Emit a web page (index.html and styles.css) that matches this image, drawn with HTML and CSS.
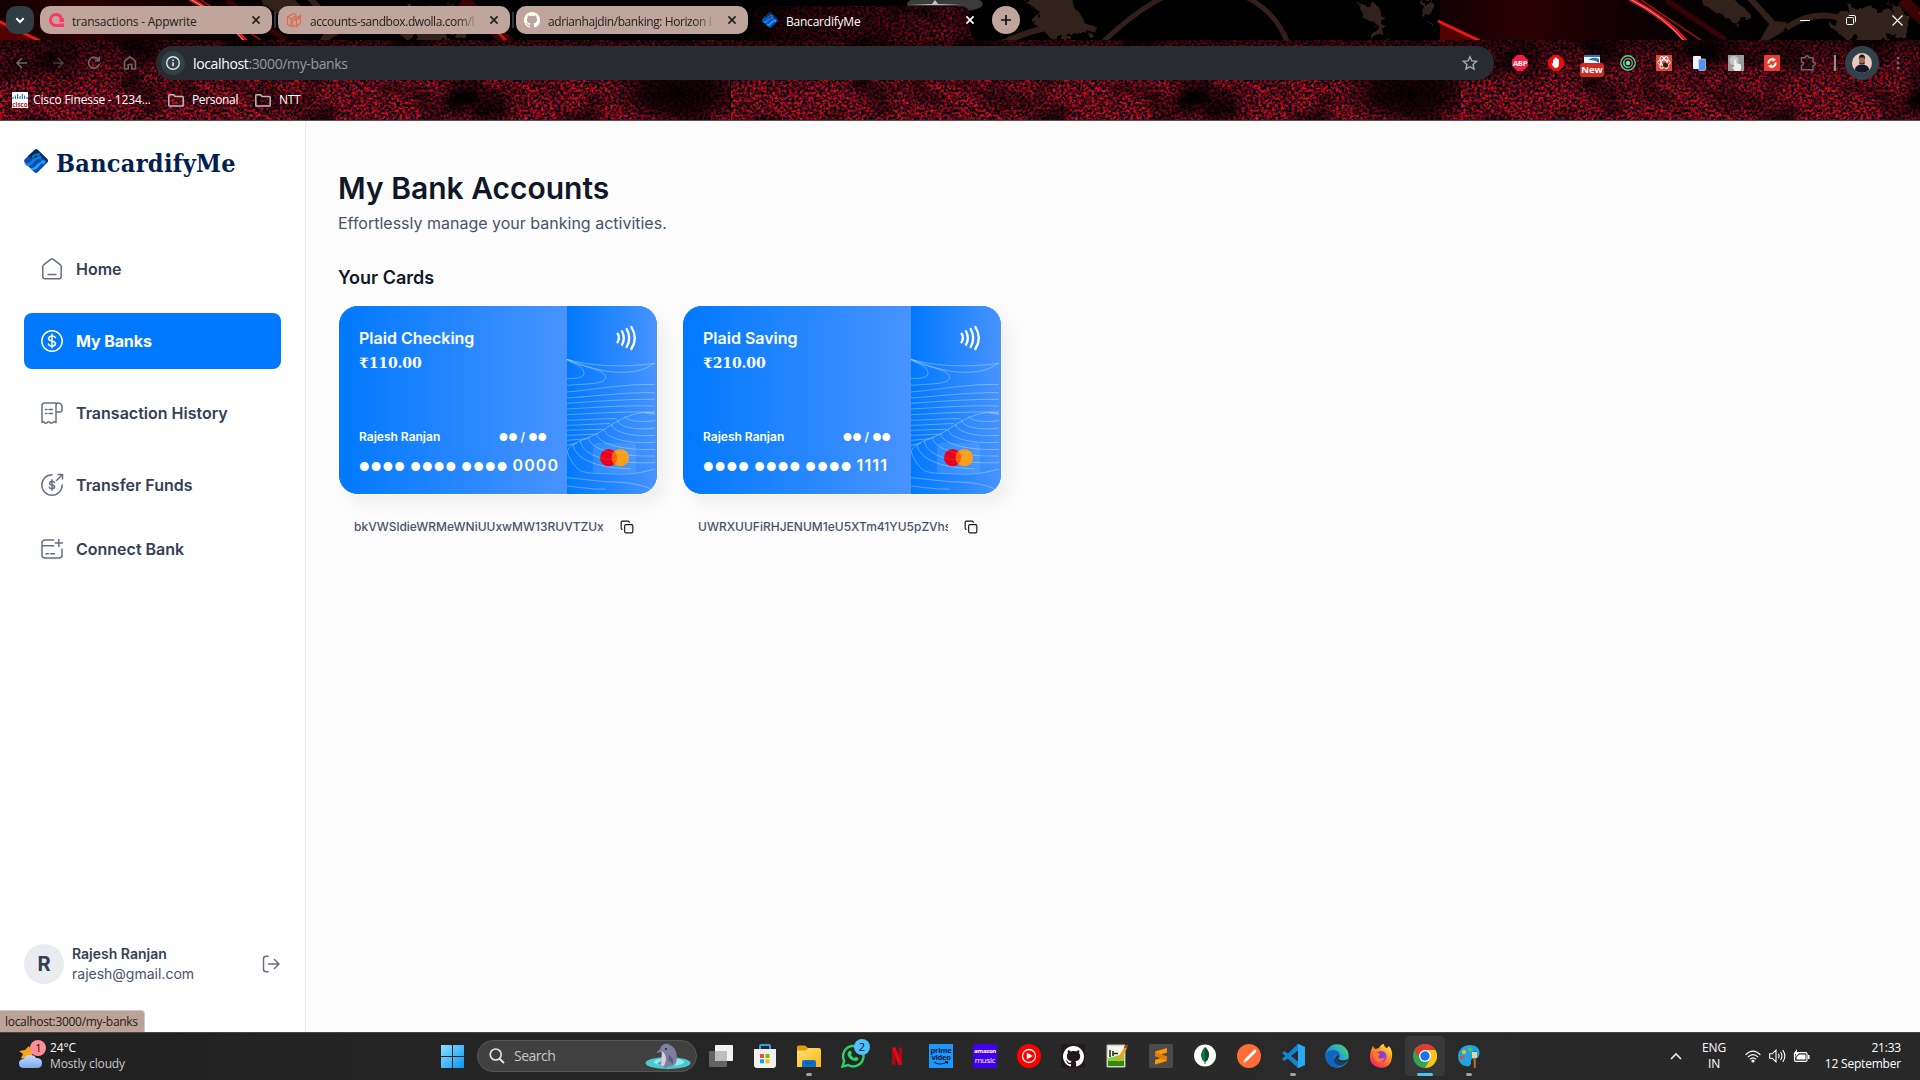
FILE: index.html
```html
<!DOCTYPE html>
<html lang="en">
<head>
<meta charset="utf-8">
<title>BancardifyMe</title>
<link rel="stylesheet" href="styles.css">
</head>
<body>
<svg width="0" height="0" class="defs">
  <defs>
    <linearGradient id="cardBlue" x1="0" x2="1" y1="0" y2="0"><stop offset="0" stop-color="#0179fe"/><stop offset="1" stop-color="#4893ff"/></linearGradient>
    <linearGradient id="win" x1="0" y1="0" x2="1" y2="1"><stop offset="0" stop-color="#8be0ff"/><stop offset="1" stop-color="#0a96f5"/></linearGradient>
    <linearGradient id="fold" x1="0" y1="0" x2="1" y2="1"><stop offset="0" stop-color="#ffe07a"/><stop offset="1" stop-color="#f8b80f"/></linearGradient>
    <linearGradient id="edgeG" x1="0" y1="1" x2="1" y2="0"><stop offset="0" stop-color="#0b5fb8"/><stop offset=".5" stop-color="#1d9be0"/><stop offset="1" stop-color="#5be05a"/></linearGradient>
    <linearGradient id="fireG" x1=".9" y1="0" x2=".2" y2="1"><stop offset="0" stop-color="#fff14a"/><stop offset=".45" stop-color="#ff8a1e"/><stop offset="1" stop-color="#f5156c"/></linearGradient>
    <linearGradient id="cloud" x1="0" y1="0" x2="0" y2="1"><stop offset="0" stop-color="#c4dcff"/><stop offset="1" stop-color="#7fa9ee"/></linearGradient>
    <symbol id="x" viewBox="0 0 10 10"><path d="M1.400 1.400l7.200 7.200M8.600 1.400l-7.200 7.200" stroke="currentColor" stroke-width="1.700" fill="none"/></symbol>
    <symbol id="octo" viewBox="0 0 16 16"><path fill="currentColor" d="M8 0C3.58 0 0 3.58 0 8c0 3.54 2.29 6.53 5.47 7.59.4.07.55-.17.55-.38 0-.19-.01-.82-.01-1.49-2.01.37-2.53-.49-2.69-.94-.09-.23-.48-.94-.82-1.13-.28-.15-.68-.52-.01-.53.63-.01 1.08.58 1.23.82.72 1.21 1.87.87 2.33.66.07-.52.28-.87.51-1.07-1.78-.2-3.64-.89-3.64-3.95 0-.87.31-1.59.82-2.15-.08-.2-.36-1.02.08-2.12 0 0 .67-.21 2.2.82.64-.18 1.32-.27 2-.27s1.36.09 2 .27c1.53-1.04 2.2-.82 2.2-.82.44 1.1.16 1.92.08 2.12.51.56.82 1.27.82 2.15 0 3.07-1.87 3.75-3.65 3.95.29.25.54.73.54 1.48 0 1.07-.01 1.93-.01 2.2 0 .21.15.46.55.38A8.01 8.01 0 0 0 16 8c0-4.42-3.58-8-8-8z"/></symbol>
    <symbol id="folder" viewBox="0 0 16 13"><path d="M.8 11.200V1.600q0-.8.8-.8h4l1.600 1.700h7.200q.8 0 .8.8v7.900q0 .9-.8.9H1.600q-.8 0-.8-.9z" fill="none" stroke="#bfb9b7" stroke-width="1.500"/></symbol>
    <symbol id="logo" viewBox="0 0 24 24"><path d="M10.300 1q1.700-1.400 3.400 0l9.500 9.300q1.400 1.700 0 3.400l-9.500 9.500q-1.700 1.400-3.400 0L.8 13.700q-1.400-1.700 0-3.400z" fill="#0a4fb0"/><path d="M12 0q1 0 1.700.7l9.800 9.600q.8.800.5 3L16 7 7 9 4 7z" fill="#052b6b"/><path d="M0 14q5 1 8-3 2-2.500 5.500-2.400V6l4 1.200-.8 4.100-1.500-1.500q-3 .2-5 3.200-3 4.500-7 4z" fill="#1479e6"/><path d="M6 19q4 .5 6.600-3.300 2-2.700 5-3l.1-1.900 3.600 1.300-1.200 3.500-1.300-1.300q-2 .3-3.600 2.600-2.600 4-6.500 4z" fill="#2aa0ff"/><path d="M8 8.500q3-3.500 8-3.500" stroke="#178f9c" stroke-width="1.600" fill="none"/></symbol>
    <symbol id="copy" viewBox="0 0 24 24"><rect x="8" y="8" width="14" height="14" rx="2" fill="none" stroke="currentColor" stroke-width="2"/><path d="M4 16c-1.100 0-2-.9-2-2V4c0-1.100.9-2 2-2h10c1.100 0 2 .9 2 2" fill="none" stroke="currentColor" stroke-width="2" stroke-linecap="round"/></symbol>
    <symbol id="panel" viewBox="0 0 270 564">
      <rect width="270" height="564" fill="url(#cardBlue)"/>
      <g fill="none" stroke="#fff" stroke-opacity=".32" stroke-width="3">
        <path d="M0 160C70 180 160 186 264 172M0 160C50 176 100 200 165 199S235 184 264 172M0 160C22 174 50 182 51 200S25 217 0 218M0 162C50 186 116 190 116 213S60 233 0 238"/>
        <path d="M0 258C90 250 180 232 264 236M0 276C90 270 180 258 264 260M0 292C90 286 180 279 264 280M0 309C90 304 180 297 264 300M0 326C80 322 150 318 208 318L264 318M0 343C60 341 110 337 150 338M0 358C50 357 90 353 130 353M0 373C40 372 75 370 108 370M0 388C30 387 60 385 84 385M0 403L60 398M0 418L30 412"/>
        <path d="M264 322C205 310 150 345 112 370S50 398 28 410 0 430 2 440 22 484 40 494 110 502 150 504 225 500 264 489"/>
        <path d="M236 320Q246 325 264 324M174 330C174 344 215 350 264 344M152 342C152 362 205 374 264 366M134 355C137 378 195 394 264 388M112 370C114 396 180 414 264 409M88 382C92 414 170 434 264 430M64 392C68 430 140 452 264 450M40 404C46 446 110 474 264 470M18 417C26 460 90 486 190 488"/>
        <path d="M0 515C60 520 95 527 145 528S230 540 250 548M0 540C40 544 70 550 115 549"/>
      </g>
      <rect x="78" y="410" width="129" height="91" rx="12" fill="#fff" fill-opacity=".1"/>
      <circle cx="125" cy="455" r="26" fill="#eb001b"/><circle cx="160" cy="455" r="26" fill="#f79e1b"/><path d="M142.500 436a26 26 0 0 1 0 38a26 26 0 0 1 0-38z" fill="#ff5f00"/>
      <path d="M99 455q40 14 87-4M112 436q35 10 70 3" stroke="#fff" stroke-opacity=".18" stroke-width="2" fill="none"/>
      <path d="M152 83q7 12 0 26M165 76q11 20 0 40M179 69q15 27 0 54M193 63q21 34 0 66" stroke="#fff" stroke-width="7" stroke-linecap="round" fill="none"/>
    </symbol>
    <filter id="grain" x="0" y="0" width="100%" height="100%" color-interpolation-filters="sRGB">
      <feTurbulence type="fractalNoise" baseFrequency=".36 .4" numOctaves="3" seed="8" result="n"/>
      <feColorMatrix in="n" values="2.600 0 0 0 -.92  0 .4 0 0 -.17  0 0 .6 0 -.2  0 0 0 0 1" result="fine"/>
      <feTurbulence type="fractalNoise" baseFrequency=".018 .024" numOctaves="3" seed="14" result="b"/>
      <feColorMatrix in="b" values="2.600 0 0 0 -.4  2.600 0 0 0 -.4  2.600 0 0 0 -.4  0 0 0 0 1" result="blot"/>
      <feComposite in="fine" in2="blot" operator="arithmetic" k1=".92"/>
    </filter>
    <filter id="rough" x="-10%" y="-10%" width="120%" height="120%"><feTurbulence type="fractalNoise" baseFrequency=".09" numOctaves="3" seed="4"/><feDisplacementMap in="SourceGraphic" scale="26"/></filter>
    <radialGradient id="dark"><stop offset="0" stop-color="#030101" stop-opacity=".95"/><stop offset=".5" stop-color="#030101" stop-opacity=".75"/><stop offset="1" stop-color="#030101" stop-opacity="0"/></radialGradient>
    <linearGradient id="dusk" x1="0" x2="0" y1="0" y2="1"><stop offset="0" stop-color="#000" stop-opacity=".6"/><stop offset="1" stop-color="#000" stop-opacity="0"/></linearGradient>
    <linearGradient id="tabdusk" x1="0" x2="1"><stop offset="0" stop-color="#000" stop-opacity=".85"/><stop offset=".45" stop-color="#000" stop-opacity=".6"/><stop offset="1" stop-color="#000" stop-opacity=".25"/></linearGradient>
    <linearGradient id="maroon" x1="0" x2="1"><stop offset="0" stop-color="#120103"/><stop offset=".25" stop-color="#2c0003"/><stop offset=".6" stop-color="#0c0001"/><stop offset="1" stop-color="#000"/></linearGradient>
    <clipPath id="tabshape"><path d="M744 41q10-1 10-11V16q0-10 10-10h196q10 0 10 10v14q0 10 10 11z"/></clipPath>
  </defs>
</svg>

<div class="screen">
<header class="chrome">
  <svg class="theme" width="1920" height="121" viewBox="0 0 1920 121">
    <rect width="1920" height="121" fill="#000"/>
    <g id="strip">
      <rect width="330" height="40" fill="url(#maroon)"/>
      <path d="M0 22L40 40H0z" fill="#520000"/>
      <path d="M-2 21L40 41" stroke="#f01812" stroke-width="3"/>
      <path d="M190 -1Q226 18 246 41" stroke="#e11621" stroke-width="4" fill="none"/><path d="M190 -1Q226 18 244 41" stroke="#ff9a9a" stroke-width="1" fill="none"/>
      <path d="M201 0L262 41" stroke="#b01018" stroke-width="1.500"/><path d="M226 0L286 40" stroke="#3a0206" stroke-width="5"/>
      <path d="M462 0L512 46" stroke="#3a0306" stroke-width="12"/><path d="M480 12L506 41" stroke="#c4120e" stroke-width="3"/>
      <g fill="#33201b" filter="url(#rough)"><path d="M245 -8h42l14 14 10 8-15 8-19-9z"/><ellipse cx="432" cy="24" rx="42" ry="17"/></g>
      <g fill="none" stroke="#33201b" stroke-width="6"><path d="M308 -4L337 28M346 28Q372 10 400 18"/><path d="M1000 44Q1060 16 1096 30"/><path d="M1104 41Q1192 -42 1248 -2Q1275 12 1287 41" stroke-width="5"/></g>
      <path d="M320 40l11-19 16 1-3 9-15 9z" fill="#33201b"/>
      <g fill="#33201b" filter="url(#rough)"><path d="M1020 -4h50l10 20 10 20h-40l-18-14 10-8z"/><path d="M1360 4h16l10 16-6 20h-10l5-18-12-4zM1418 0h14l-4 22z"/></g>
    </g>
    <use href="#strip" x="1440"/>
    <ellipse cx="945" cy="4" rx="38" ry="9" fill="#aaa" opacity=".35"/><path d="M910 5l22-1 3-4 3 4 24 1z" fill="#fff" opacity=".7"/>
    <g id="tile"><rect y="40" width="730" height="80" filter="url(#grain)"/><rect y="40" width="730" height="50" fill="url(#dusk)"/><ellipse cx="680" cy="94" rx="75" ry="34" fill="url(#dark)"/></g>
    <use href="#tile" x="731"/><use href="#tile" x="1461"/>
    <g clip-path="url(#tabshape)"><rect x="740" y="4" width="250" height="37" filter="url(#grain)"/><rect x="740" y="4" width="250" height="37" fill="url(#tabdusk)"/></g>
    <path d="M0 120.500H1920" stroke="#4b5458"/>
  </svg>

  <div class="tabs">
    <div class="tabmenu"><svg width="10" height="7" viewBox="0 0 10 7"><path d="M1.300 1.300L5 5l3.700-3.700" fill="none" stroke="#fff" stroke-width="2"/></svg></div>
    <div class="tab"><svg width="16" height="16" viewBox="0 0 16 16"><path d="M8 1a7 7 0 1 0 0 14h8v-3.500H11a4.500 4.500 0 0 1-7-3.400A4 4 0 0 1 11.500 6v4H16V6h-1.200A7 7 0 0 0 8 1z" fill="#fd366e"/></svg><span class="tabname">transactions - Appwrite</span><svg class="close"><use href="#x"/></svg></div>
    <i class="tabsep"></i>
    <div class="tab"><svg width="16" height="16" viewBox="0 0 16 16" fill="none" stroke="#e0694e" stroke-width="1.100"><path d="M1.500 5v7.500l3.500 2V7L1.500 5l6-3.500 2.500 1.400M5 7l5-3v2M6.500 15V8.500L10 6.500l4.500-3V11l-4 3.500V8l4-3M6.500 15l4-2M8 7.500l2.500 1"/></svg><span class="tabname fade">accounts-sandbox.dwolla.com/l</span><svg class="close"><use href="#x"/></svg></div>
    <i class="tabsep"></i>
    <div class="tab"><svg width="16" height="16" class="white"><use href="#octo"/></svg><span class="tabname fade">adrianhajdin/banking: Horizon i</span><svg class="close"><use href="#x"/></svg></div>
    <div class="tab active"><svg width="16" height="16"><use href="#logo"/></svg><span class="tabname">BancardifyMe</span><svg class="close"><use href="#x"/></svg></div>
    <div class="newtab"><svg width="12" height="12" viewBox="0 0 12 12"><path d="M6 1v10M1 6h10" stroke="#111" stroke-width="1.700"/></svg></div>
    <div class="winbtns">
      <svg width="10" height="10"><path d="M0 5.500h10" stroke="#fff"/></svg>
      <svg width="10" height="10" viewBox="0 0 10 10" fill="none" stroke="#fff"><rect x=".5" y="2.500" width="7" height="7" rx="1"/><path d="M2.500 1q.4-.5 1-.5H8q1.500 0 1.500 1.500v4.500q0 .6-.6 1"/></svg>
      <svg width="11" height="11"><path d="M.5.5l10 10M10.500.5l-10 10" stroke="#fff" stroke-width="1.100"/></svg>
    </div>
  </div>

  <div class="toolbar">
    <div class="navbtns">
      <svg width="16" height="16" viewBox="0 0 16 16"><path d="M13 8H3.300M8 3L3 8l5 5" /></svg>
      <svg class="off" width="16" height="16" viewBox="0 0 16 16"><path d="M3 8h9.700M8 3l5 5-5 5"/></svg>
      <svg width="16" height="16" viewBox="0 0 16 16"><path d="M13.200 9A5.400 5.400 0 1 1 12.600 5M13.300 1.500v4.200H9"/></svg>
      <svg width="16" height="16" viewBox="0 0 16 16"><path d="M2.500 6.200L8 1.800l5.500 4.400V14H9.800V9.500H6.200V14H2.500z"/></svg>
    </div>
    <div class="omni">
      <div class="info"><svg width="16" height="16" viewBox="0 0 16 16"><circle cx="8" cy="8" r="6.300" fill="none" stroke="#e4e7e8" stroke-width="1.400"/><path d="M8 7.200v4M8 4.500v1.500" stroke="#e4e7e8" stroke-width="1.600"/></svg></div>
      <span class="url"><b>localhost</b>:3000/my-banks</span>
      <svg width="16" height="16" viewBox="0 0 16 16"><path d="M8 1.700l1.900 4.200 4.600.5-3.400 3.100.9 4.500L8 11.700 4 14l.9-4.500L1.500 6.400l4.600-.5z" fill="none" stroke="#a9aeb0" stroke-width="1.400"/></svg>
    </div>
    <div class="exts">
      <svg viewBox="0 0 16 16"><path d="M5 0h6l5 5v6l-5 5H5l-5-5V5z" fill="#f21c44"/><text x="8" y="10.700" class="abp">ABP</text></svg>
      <svg viewBox="0 0 16 16"><path d="M5 0h6l5 5v6l-5 5H5l-5-5V5z" fill="#e80f0c"/><path d="M5 9V5q.7-1 1.400 0V3q.8-1 1.500 0 .8-1 1.500.4v1q.8-.8 1.500.2v5q-.3 3.500-3 3.500-2 0-3-2L3.500 8.500Q4.300 7.800 5 9z" fill="#fff"/></svg>
      <div class="newext"><svg viewBox="0 0 16 8"><rect width="16" height="8" fill="#f1f5f8"/><path d="M0 0h16v2H0zM4 5q6-4 11-1v4q-3-3-11-3" fill="#2f74ac"/></svg><span>New</span></div>
      <svg viewBox="0 0 16 16" fill="none"><circle cx="8" cy="8" r="7.200" fill="#10181a" stroke="#55cf9f" stroke-width="1.400"/><circle cx="8" cy="8" r="4.300" stroke="#e97c48" stroke-width="1.300"/><path d="M4 6.500a4.300 4.300 0 0 0 5 5.700" stroke="#55cf9f" stroke-width="1.300"/><circle cx="8" cy="8" r="2.200" fill="#62e8ad"/></svg>
      <svg viewBox="0 0 16 16"><rect width="16" height="16" fill="#d94b37"/><g fill="none" stroke="#fff"><ellipse cx="8" cy="7.500" rx="6.500" ry="2.600"/><ellipse cx="8" cy="7.500" rx="6.500" ry="2.600" transform="rotate(60 8 7.500)"/><ellipse cx="8" cy="7.500" rx="6.500" ry="2.600" transform="rotate(-60 8 7.500)"/></g><circle cx="9.500" cy="10" r="2.600" fill="#3b1a16"/></svg>
      <svg viewBox="0 0 16 16"><rect x="1" y="1" width="8" height="13" rx="1" fill="#eef3fa"/><rect x="6.500" y="4" width="7" height="11.500" rx="1" fill="#4f94ee" stroke="#dce8fa" stroke-width=".6"/></svg>
      <svg viewBox="0 0 16 16"><rect width="16" height="16" fill="#9c9c9c"/><circle cx="6" cy="5.500" r="4.500" fill="#c6c6c6"/><path d="M6 12V5q1-1.500 2 0v3l5 1.500V14l-1 2H7l-3-4z" fill="#eee"/></svg>
      <svg viewBox="0 0 16 16"><rect width="16" height="16" rx="1" fill="#ea3c31"/><path d="M4.500 8.500a3.600 3.600 0 0 1 4.500-4M11.500 7.500a3.600 3.600 0 0 1-4.500 4" stroke="#fff" stroke-width="2" fill="none"/><path d="M8.500 2.500l3.500 2.300-3.500 2.200zM7.500 13.500L4 11.200 7.500 9z" fill="#fff"/></svg>
      <svg viewBox="0 0 16 16"><path d="M1.500 2.800H5Q5.600.7 7 .7t2 2.100h4v4.400q2.200.2 2.200 1.700T13 10.800v4H1.500v-4.300q2-.4 2-1.800t-2-1.700z" fill="none" stroke="#6b6562" stroke-width="1.500"/></svg>
    </div>
    <i class="vbar"></i>
    <div class="profile"><svg width="20" height="20" viewBox="0 0 20 20"><clipPath id="pc"><circle cx="10" cy="10" r="10"/></clipPath><g clip-path="url(#pc)"><rect width="20" height="20" fill="#e6c9bf"/><path d="M3 20q-1-7 4-8h6q5 1 4 8z" fill="#151728"/><ellipse cx="10" cy="7" rx="3" ry="4.500" fill="#9a6a55"/><path d="M6.800 6q0-4.500 3.200-4.500T13.200 6L12 4.500H8zM7.500 9q2.500 3 5 0v2.500h-5z" fill="#1b1517"/></g></svg></div>
    <svg class="dots" width="4" height="14"><circle cx="2" cy="2" r="1.500"/><circle cx="2" cy="7" r="1.500"/><circle cx="2" cy="12" r="1.500"/></svg>
  </div>

  <div class="bookmarks">
    <svg width="16" height="16" viewBox="0 0 16 16"><rect width="16" height="16" fill="#fff"/><path d="M1 5v2M3.300 3.500V7M5.600 2v5M8 4v3M10.300 2v5M12.600 3.500V7M15 5v2" stroke="#1f6c9c" stroke-width="1.100"/><text x="8" y="14.500" class="cisco">cisco</text></svg><span class="bm1">Cisco Finesse - 1234...</span>
    <svg width="16" height="13"><use href="#folder"/></svg><span class="bm2">Personal</span>
    <svg width="16" height="13"><use href="#folder"/></svg><span class="bm3">NTT</span>
  </div>
</header>

<div class="page">
  <aside class="sidebar">
    <div class="brand"><svg width="24" height="24"><use href="#logo"/></svg><span>BancardifyMe</span></div>
    <nav>
      <a><svg width="24" height="24" viewBox="0 0 24 24"><path d="M2.800 9.600q0-1.100.8-1.700L10.700 2.300q1.300-1 2.600 0l7.100 5.600q.8.600.8 1.700v10.200q0 2-2 2H4.800q-2 0-2-2zM8 17.400h8"/></svg>Home</a>
      <a class="on"><svg width="24" height="24" viewBox="0 0 24 24"><circle cx="12" cy="12" r="10.200"/><path d="M15.500 8.700Q14.800 7 12 7T8.600 9.400q0 2 3.400 2.500t3.500 2.700Q15.400 17 12 17T8.400 15M12 5.200v13.600"/></svg>My Banks</a>
      <a><svg width="24" height="24" viewBox="0 0 24 24"><path d="M16 2H4.500Q2 2 2 5v16.500q1.300-1.500 2.600 0t2.700 0q1.300-1.500 2.600 0t2.700 0 3.400 0V4.500Q16 2 18.500 2T22 5v4q0 2-2 2h-4M5.500 8.500H7M9 8.500h3.500M5.500 12.500H7M9 12.500h3.500"/></svg>Transaction History</a>
      <a><svg width="24" height="24" viewBox="0 0 24 24"><path d="M12 1.800A10.200 10.200 0 1 0 22.200 12M16.500 7.500l6-6M18 1.500h4.500V6"/><path d="M14.500 9.500Q14 8.300 12 8.300T9.500 10q0 1.500 2.500 1.900t2.600 2Q14.500 15.700 12 15.700T9.400 14.300M12 6.800v10.400"/></svg>Transfer Funds</a>
      <a class="short"><svg width="24" height="24" viewBox="0 0 24 24"><path d="M13.500 3H5Q2 3 2 6v12q0 3 3 3h14q3 0 3-3v-6M2 8.700h11.500M18.800 2.500v7M15.300 6h7M6 16.700h2.500M10.500 16.700h4"/></svg>Connect Bank</a>
    </nav>
    <div class="user">
      <div class="avatar">R</div>
      <div class="who"><b>Rajesh Ranjan</b><span>rajesh@gmail.com</span></div>
      <svg width="18" height="18" viewBox="0 0 18 18"><path d="M6 1.200H4Q1.500 1.200 1.500 3.700v10.600Q1.500 16.800 4 16.800h2M6.500 9H17M12.500 4.500L17 9l-4.500 4.500"/></svg>
    </div>
  </aside>
  <main>
    <h1>My Bank Accounts</h1>
    <p class="sub">Effortlessly manage your banking activities.</p>
    <h2>Your Cards</h2>
    <div class="cards">
      <section>
        <div class="card"><div class="info-side"><div><h3>Plaid Checking</h3><p class="money">₹110.00</p></div><div><div class="holder"><span>Rajesh Ranjan</span><span><small>●●</small> / <small>●●</small></span></div><p class="num">●●●● ●●●● ●●●● <span>0000</span></p></div></div><svg width="90" height="188"><use href="#panel"/></svg></div>
        <div class="share"><span>bkVWSldieWRMeWNiUUxwMW13RUVTZUx</span><svg width="14" height="14"><use href="#copy"/></svg></div>
      </section>
      <section>
        <div class="card"><div class="info-side"><div><h3>Plaid Saving</h3><p class="money">₹210.00</p></div><div><div class="holder"><span>Rajesh Ranjan</span><span><small>●●</small> / <small>●●</small></span></div><p class="num">●●●● ●●●● ●●●● <span>1111</span></p></div></div><svg width="90" height="188"><use href="#panel"/></svg></div>
        <div class="share"><span>UWRXUUFiRHJENUM1eU5XTm41YU5pZVhs</span><svg width="14" height="14"><use href="#copy"/></svg></div>
      </section>
    </div>
  </main>
  <div class="status">localhost:3000/my-banks</div>
</div>

<footer class="taskbar">
  <div class="weather"><svg width="28" height="30" viewBox="0 0 28 30"><path d="M11 6l2 4 3 1-2 4-4 5-7-2 2-4-4-3 6-1z" fill="#f9a51a"/><path d="M6 28q-5 0-5-4.500T6 19q1-4 6-4 5 0 6 3 6 0 6 5t-5 5z" fill="url(#cloud)"/><circle cx="20" cy="8" r="8" fill="#ff8d98"/><text x="20.500" y="12" class="badge">1</text></svg><div><span>24°C</span><span class="dim">Mostly cloudy</span></div></div>
  <div class="apps">
    <svg width="23" height="23" viewBox="0 0 23 23"><path d="M0 0h11v11H0zM12 0h11v11H12zM0 12h11v11H0zM12 12h11v11H12z" fill="url(#win)"/></svg>
    <div class="search"><svg width="16" height="16" viewBox="0 0 16 16"><circle cx="6.700" cy="6.500" r="5.500" fill="none" stroke="#e6e6e6" stroke-width="1.600"/><path d="M10.600 10.700L15 15" stroke="#e6e6e6" stroke-width="1.900"/></svg><span>Search</span><svg width="46" height="26" viewBox="0 0 46 26"><ellipse cx="23" cy="20" rx="22.500" ry="6" fill="#4cc9cf"/><ellipse cx="24" cy="19" rx="15" ry="4" fill="#8eeaec"/><path d="M15 6q2-6 8-5 9 3 9 14-1 9-6 8l-6 2-3-3-5-1 4-3q2-5 0-9l-5 1z" fill="#7d7f9f"/><path d="M17 8q4 3 4 9l-2 6-3-1z" fill="#d9d0dc"/><circle cx="21" cy="6" r="1" fill="#222"/><path d="M24 12q5 3 4 9l-5-4z" fill="#5a5c80"/></svg></div>
    <div class="app"><svg viewBox="0 0 24 24"><rect x="6" y="1" width="18" height="16" rx="1" fill="#f2f2f2"/><rect x="0" y="7" width="18" height="16" rx="1" fill="#6e6e6e" fill-opacity=".85"/><path d="M6 7h12v10H6z" fill="#bdbdbd"/></svg></div>
    <div class="app"><svg viewBox="0 0 24 24"><path d="M7 5V2q0-1 1-1h8q1 0 1 1v3" fill="none" stroke="#2aa7e8" stroke-width="2"/><path d="M1 5h22v16q0 3-3 3H4q-3 0-3-3z" fill="#f1f1f1"/><path d="M7 10h4v4H7z" fill="#f25022"/><path d="M12.500 10h4v4h-4z" fill="#7fba00"/><path d="M7 15.300h4v4H7z" fill="#00a4ef"/><path d="M12.500 15.300h4v4h-4z" fill="#ffb900"/></svg></div>
    <div class="app run"><svg viewBox="0 0 24 24"><path d="M0 3q0-1.500 1.500-1.500H8L11 4v5H0z" fill="#e2a007"/><path d="M0 6.500h9L11 4h11q2 0 2 2v17H0z" fill="url(#fold)"/><path d="M5 23v-5q0-2 2-2h10q2 0 2 2v5z" fill="#1270c4"/><path d="M8 19h8" stroke="#0a4f94"/></svg></div>
    <div class="app"><svg viewBox="0 0 24 24"><path d="M1.500 22.500l1.700-5.700A10.200 10.200 0 1 1 7.200 21z" fill="none" stroke="#2bd366" stroke-width="2.400"/><path d="M8 7q1.500-1.300 2.300.7l.7 1.800-1 1.300q1 2.200 3.500 3.200l1.300-1.300 2.700 1.300q0 3-3 3-6-.5-8-6-.2-2.500 1.500-4z" fill="#2bd366"/></svg><em>2</em></div>
    <div class="app"><svg viewBox="0 0 24 24"><path d="M7 3.500h3.500v17L7 21zM13.500 3.500H17V21l-3.500-.5z" fill="#b00610"/><path d="M7 3.500h3.500L17 21l-3.700-.5z" fill="#e50914"/></svg></div>
    <div class="app"><div class="tile prime">prime<br>video<svg viewBox="0 0 16 5"><path d="M1 1q6 4 13 0M12 .6h2.400V3" fill="none" stroke="#101c33" stroke-width="1.200"/></svg></div></div>
    <div class="app"><div class="tile amz"><b>amazon</b>music</div></div>
    <div class="app"><svg viewBox="0 0 24 24"><circle cx="12" cy="12" r="12" fill="#f00"/><circle cx="12" cy="12" r="6.500" fill="none" stroke="#fff" stroke-width="1.300"/><path d="M9.800 8.400l6 3.600-6 3.600z" fill="#fff"/></svg></div>
    <div class="app"><div class="gh"><svg viewBox="0 0 16 16"><use href="#octo"/></svg></div></div>
    <div class="app"><svg viewBox="0 0 24 24"><path d="M2 1h18v22H2z" fill="#f3f7ea"/><path d="M3 14q8-2 16-4v12H3z" fill="#8ccf3e"/><path d="M3 17h16v5H3z" fill="#318b12"/><path d="M2 1h18v22H2z" fill="none" stroke="#b4c0a4"/><path d="M5 6v7M8 7v5M8 9.500h5" stroke="#222" stroke-width="1.500"/><path d="M21 3L13 17" stroke="#f0a21c" stroke-width="3"/><path d="M22 1l-2 3" stroke="#805040" stroke-width="3"/></svg></div>
    <div class="app"><svg viewBox="0 0 24 24"><rect width="24" height="24" rx="2" fill="#4b4b4b"/><path d="M18 4v4.500l-6 2 6 2V17L6 20.500V16l6-2-6-2V7.500z" fill="#ff9800"/><path d="M6 8l12 4.500V17L6 12z" fill="#e07d06"/></svg></div>
    <div class="app"><svg viewBox="0 0 24 24"><circle cx="12" cy="11.500" r="11" fill="#fff"/><path d="M12 3q4.500 4 4 9-.7 4-3.500 6V20h-1v-2Q8.500 16 8 12q0-5 4-9z" fill="#11733f"/><path d="M12 3q4.500 4 4 9-.7 4-4 6z" fill="#084a30"/></svg></div>
    <div class="app"><svg viewBox="0 0 24 24"><circle cx="12" cy="12" r="12" fill="#ff6c37"/><path d="M6 19l2-4 8-8q1-2 2.500-1.500T19 8l-8.500 8.500z" fill="#fff"/></svg></div>
    <div class="app run"><svg viewBox="0 0 24 24"><path d="M17 0l7 3v18l-7 3L1 9l2.500-2L17 17.500V6.500L3.500 17 1 15z" fill="#1185d2"/><path d="M17 0l7 3v18l-7 3z" fill="#2aa8f2"/></svg></div>
    <div class="app"><svg viewBox="0 0 24 24"><circle cx="12" cy="12" r="11.700" fill="url(#edgeG)"/><path d="M.3 12Q2 5 9 6q6 1 6 6 0 2-1.500 3l-3-4Q7 13 9 17q2 4 6 4.500-3 2.500-7 1.500Q.5 20 .3 12z" fill="#1265bd"/><path d="M11 12q-1.500 4 3 6 4 1.500 8-1-3 5.500-8 4.500-6-2-5-7.500z" fill="#1a3e68"/><path d="M11 13q1-2 2.500-1.500.8 1.500-.6 3.200 1.500 1.800 5 1.800 3 0 5.400-1.700l-1.500 2.700q-4 2-8 .5-3-1.500-2.800-5z" fill="#262a2d"/></svg></div>
    <div class="app"><svg viewBox="0 0 24 24"><path d="M2 6l2-4 2 3 4-1q2-4 5-4 0 3 3 4l2-2q4 5 3 11-1 11-11 11Q0 22 1 11z" fill="url(#fireG)"/><circle cx="12" cy="12.500" r="5.500" fill="#8b3be0"/><path d="M4 10q4-3 7 0l-2 3q3 3 7 0-1 5-6 5-5-1-6-8z" fill="#ff7a25"/></svg></div>
    <div class="app chromeapp"><svg viewBox="0 0 24 24"><circle cx="12" cy="12" r="12" fill="#2fa550"/><path d="M1.600 6A12 12 0 0 1 22.400 6H12L6.800 15z" fill="#e33b2e"/><path d="M22.400 6A12 12 0 0 1 12 24l5.200-9L12 6z" fill="#fcc31c"/><circle cx="12" cy="12" r="6" fill="#fff"/><circle cx="12" cy="12" r="4.700" fill="#1b73e8"/></svg></div>
    <div class="app run"><svg viewBox="0 0 24 24"><path d="M12 1Q23 1 22.500 10q-.5 5-6 4.500-3 0-2.500 4 0 4-4 4Q1 21 1 12 2 2 12 1z" fill="#21a5dc"/><circle cx="7" cy="8" r="2" fill="#f6c52b"/><circle cx="13" cy="5.500" r="2" fill="#5fc43c"/><circle cx="18" cy="9" r="2" fill="#1864b8"/><circle cx="5" cy="13.500" r="2" fill="#ea493b"/><path d="M15 8h5v6h-5z" fill="#e8cfa4"/><path d="M16.500 14h2.300v10h-2z" fill="#b66e20"/></svg></div>
  </div>
  <div class="tray">
    <svg width="12" height="8" viewBox="0 0 12 8"><path d="M1 7l5-5 5 5" fill="none" stroke="#e8e8e8" stroke-width="1.600"/></svg>
    <div class="lang">ENG<br>IN</div>
    <svg class="wifi" width="16" height="13" viewBox="0 0 16 13"><g fill="none" stroke="#fff" stroke-width="1.200"><path d="M.6 4.800q7.400-7.400 14.800 0M2.800 7.200q5.200-5.200 10.400 0M5 9.400q3-3 6 0"/></g><circle cx="8" cy="11" r="1.600" fill="#fff"/></svg>
    <svg class="vol" width="17" height="14" viewBox="0 0 17 14"><path d="M.6 4.800h2.600L7 1.200v11.600L3.200 9.200H.6zM9.300 4.800q1.600 2.200 0 4.400M11.500 3q3 4 0 8M13.700 1.200q4.400 5.800 0 11.600" fill="none" stroke="#fff" stroke-width="1.100"/></svg>
    <svg class="bat" width="17" height="14" viewBox="0 0 17 14"><rect x="1.500" y="3.600" width="12.500" height="8.800" rx="1.500" fill="none" stroke="#fff" stroke-width="1.200"/><path d="M3.500 10.500V8L6 5.600h6.500v4.900zM15 6h1.500v4H15z" fill="#fff"/><path d="M4 0L.5 5H3L2 8.500 6 4H3.700z" fill="#fff"/></svg>
    <div class="clock">21:33<br><span>12 September</span></div>
  </div>
</footer>
</div>
</body>
</html>
```
FILE: styles.css
```css
* { box-sizing: border-box; }
body { margin: 0; background: #fcfcfd; font-family: Inter, sans-serif; }
h1, h2, h3, p { margin: 0; }
.defs { position: absolute; }
.screen { width: 1920px; height: 1080px; display: flex; flex-direction: column; overflow: hidden; }
svg { flex: none; display: block; }

.chrome { position: relative; height: 121px; color: #fff; font: 12px "Open Sans", sans-serif; flex: none; }
.theme { position: absolute; left: 0; top: 0; }
.tabs, .toolbar, .bookmarks { position: relative; display: flex; align-items: center; }
.tabs { height: 40px; padding-left: 6px; }
.tabmenu { width: 28px; height: 28px; border-radius: 10px; background: #2f3c41; display: grid; place-items: center; margin-right: 6px; }
.tab { width: 232px; height: 28px; border-radius: 10px; background: #bfa59b; color: #222; display: flex; align-items: center; padding: 0 10px 0 8px; }
.tab + .tab { margin-left: 6px; }
.tab .white { color: #fff; }
.tabname { flex: 1; margin-left: 8px; white-space: nowrap; overflow: hidden; letter-spacing: -.22px; margin-right: 9px; height: 19px; line-height: 21px; }
.tabname.fade { letter-spacing: -.42px; -webkit-mask-image: linear-gradient(90deg, #000 86%, transparent); mask-image: linear-gradient(90deg, #000 86%, transparent); }
.close { width: 10px; height: 10px; margin-right: 1px; }
.tabsep { width: 2px; height: 16px; margin: 0 2px; background: #2b3a40; }
.tab.active { background: none; color: #fff; }
.newtab { width: 28px; height: 28px; border-radius: 50%; background: #bfa59b; display: grid; place-items: center; margin-left: 6px; }
.winbtns { margin-left: auto; display: flex; align-items: center; gap: 36px; padding-right: 17px; }

.toolbar { height: 46px; }
.navbtns { display: flex; gap: 20px; padding-left: 14px; width: 156px; }
.navbtns path { fill: none; stroke: #6e6462; stroke-width: 1.6; }
.navbtns .off { opacity: .55; }
.omni { width: 1338px; height: 34px; border-radius: 17px; background: #282c30; display: flex; align-items: center; padding: 0 16px 0 5px; }
.info { width: 24px; height: 24px; border-radius: 50%; background: #304147; display: grid; place-items: center; }
.url { margin-left: 8px; flex: 1; font-size: 14px; letter-spacing: -.36px; color: #969b9e; }
.url b { font-weight: 400; color: #fff; }
.exts { display: flex; gap: 20px; margin-left: 18px; align-items: center; }
.exts svg { width: 16px; height: 16px; }
.abp { font: 700 7.600px "Open Sans", sans-serif; fill: #fff; text-anchor: middle; letter-spacing: -.3px; }
.newext { width: 16px; height: 16px; position: relative; }
.newext svg { height: 8px; }
.newext span { position: absolute; left: -4px; top: 8px; width: 24px; height: 14px; border-radius: 3px; background: #cf2b20; font: 700 9.500px/14px "Open Sans", sans-serif; text-align: center; }
.vbar { width: 2px; height: 16px; background: #a48d84; margin-left: 18px; }
.profile { width: 34px; height: 34px; border-radius: 50%; background: #304147; display: grid; place-items: center; margin-left: 9px; }
.dots { margin-left: 17px; fill: #6b6562; }

.bookmarks { height: 34px; padding: 0 0 8px 12px; margin-top: 1px; }
.bookmarks span { letter-spacing: -.35px; white-space: nowrap; line-height: 16px; padding-bottom: 1px; }
.bookmarks .bm1 { margin-left: 5px; width: 135px; letter-spacing: -.14px; }
.bm2 { margin-left: 8px; width: 63px; }
.bm3 { margin-left: 8px; }
.cisco { font: 700 6.300px "Open Sans", sans-serif; fill: #b31622; text-anchor: middle; }

.page { position: relative; height: 911px; display: flex; flex: none; }
.sidebar { width: 306px; background: #fff; border-right: 1px solid #eaecf0; padding: 28px 24px 0; display: flex; flex-direction: column; }
.brand { display: flex; gap: 8px; height: 30px; }
.brand span { font: 700 25px/30px "DejaVu Serif Condensed", "DejaVu Serif", serif; color: #00214f; letter-spacing: .3px; }
nav { margin-top: 62px; display: flex; flex-direction: column; gap: 16px; }
nav a { height: 56px; border-radius: 8px; display: flex; align-items: center; gap: 12px; padding-left: 16px; font-weight: 600; font-size: 16px; color: #344054; }
nav a.short { height: 40px; }
nav svg, .user svg { fill: none; stroke: #667085; stroke-width: 1.500; stroke-linecap: round; stroke-linejoin: round; }
nav a.on { background: #0179fe; color: #fff; letter-spacing: -.1px; font-weight: 700; }
nav a.on svg { stroke: #fff; }
.user { margin-top: auto; margin-bottom: 48px; padding-right: 1px; display: flex; align-items: center; height: 40px; }
.avatar { width: 40px; height: 40px; border-radius: 50%; background: #eaecf0; display: grid; place-items: center; font-weight: 700; font-size: 20px; color: #344054; }
.who { margin-left: 8px; flex: 1; display: flex; flex-direction: column; font-size: 14px; line-height: 20px; color: #475467; }
.who b { font-weight: 600; color: #344054; }
main { padding: 48px 32px; }
h1 { font-weight: 600; font-size: 30px; line-height: 38px; color: #101828; }
.sub { margin-top: 4px; font-size: 16px; line-height: 24px; color: #475467; }
h2 { margin-top: 29px; font-weight: 600; font-size: 18px; line-height: 28px; color: #101828; }
.cards { display: flex; gap: 24px; margin-top: 13px; }
.card { width: 320px; height: 190px; border: 1px solid #fff; border-radius: 20px; overflow: hidden; display: flex; background: #4893ff; box-shadow: 8px 10px 16px rgba(0,0,0,.05); color: #fff; }
.info-side { width: 228px; background: linear-gradient(90deg, #0179fe, #4893ff); padding: 20px 20px 15px; display: flex; flex-direction: column; justify-content: space-between; }
h3 { font-weight: 600; font-size: 16px; line-height: 24px; }
.money { font: 700 14px/26px "DejaVu Serif", serif; letter-spacing: -.1px; }
.holder { display: flex; justify-content: space-between; font-weight: 600; font-size: 12px; line-height: 18px; }
.holder small { font-size: 10.300px; }
.num { font-weight: 600; font-size: 11.700px; line-height: 24px; letter-spacing: 1.100px; margin-top: 7px; white-space: nowrap; }
.num span { font-size: 16px; }
.share { display: flex; align-items: center; gap: 17px; padding-left: 16px; margin-top: 22px; height: 20px; font-size: 12px; font-weight: 500; color: #475467; }
.share span { width: 250px; margin-right: -1px; overflow: hidden; white-space: nowrap; line-height: 18px; padding-bottom: 1px; }
.share svg { color: #15181c; }
.status { position: absolute; left: 0; bottom: 0; width: 145px; height: 22px; background: #bda298; border-top: 1px solid #ccc; border-right: 1px solid #ccc; border-top-right-radius: 4px; padding-left: 5px; font: 12px/22px "Open Sans", sans-serif; letter-spacing: -.3px; color: #251b19; }

.taskbar { position: relative; height: 48px; background: linear-gradient(90deg, #212121, #2a2a2a 70%, #282828); border-top: 1px solid #444; padding-bottom: 1px; display: flex; align-items: center; font: 12px/16px "Open Sans", sans-serif; color: #fff; }
.weather { width: 441px; display: flex; padding-left: 18px; align-items: center; }
.weather svg { margin-right: 4px; margin-top: -2px; }
.weather span { display: block; letter-spacing: -.15px; }
.weather .dim { color: #c8c8c8; }
.badge { font: 11px "Open Sans", sans-serif; fill: #111; text-anchor: middle; }
.apps { display: flex; align-items: center; }
.search { margin: 0 2px 0 13px; width: 220px; height: 32px; border-radius: 16px; background: #404040; border: 1px solid #565656; display: flex; align-items: center; padding: 0 5px 0 11px; }
.search span { flex: 1; margin-left: 9px; font-size: 14px; color: #c8c8c8; letter-spacing: -.5px; }
.app { position: relative; width: 44px; height: 46px; display: grid; place-items: center; }
.app > svg { width: 24px; height: 24px; }
.run::after, .chromeapp::after { content: ""; position: absolute; bottom: 3px; left: 19px; width: 6px; height: 3px; border-radius: 2px; background: #a0a0a0; }
.chromeapp::before { content: ""; position: absolute; left: 2px; top: 3px; width: 40px; height: 40px; border-radius: 4px; background: #383838; }
.chromeapp svg { position: relative; }
.chromeapp::after { left: 14px; width: 16px; background: #4cc2ff; }
.app em { position: absolute; left: 23px; top: 6px; width: 16px; height: 16px; border-radius: 50%; background: #4cc2ff; color: #111; font: 11px/16px "Open Sans", sans-serif; text-align: center; }
.tile { width: 24px; height: 24px; font: 700 7.600px/7px "Open Sans", sans-serif; text-align: center; letter-spacing: -.3px; }
.prime { background: #1a98ff; color: #101c33; padding-top: 3px; }
.prime svg { width: 16px; height: 5px; margin: 0 auto; }
.amz { background: #4200f0; padding-top: 4px; font-weight: 400; font-size: 8px; line-height: 9px; }
.amz b { display: block; font-size: 6px; line-height: 7px; }
.gh { width: 24px; height: 24px; background: #24181c; display: grid; place-items: center; }
.gh svg { width: 21px; height: 21px; }
.tray { margin-left: auto; display: flex; align-items: center; padding-right: 19px; }
.lang { width: 40px; text-align: center; margin-left: 12px; letter-spacing: -.2px; }
.wifi { margin-left: 11px; }
.vol { margin-left: 8px; }
.bat { margin-left: 7px; }
.clock { width: 91px; text-align: right; letter-spacing: -.2px; white-space: nowrap; }
```
